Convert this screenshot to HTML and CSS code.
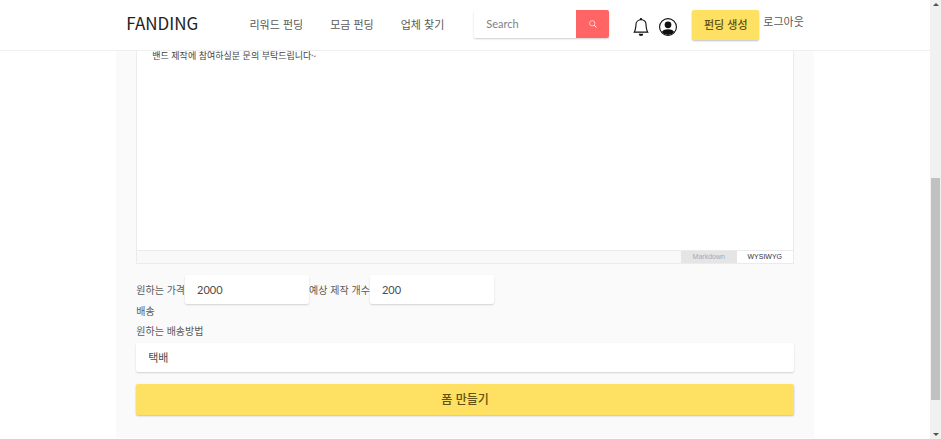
FILE: index.html
```html
<!DOCTYPE html>
<html lang="ko">
<head>
<meta charset="utf-8">
<title>FANDING</title>
<link rel="stylesheet" href="styles.css">
</head>
<body>
<div class="page">
  <header class="header">
    <div class="header-inner">
      <a class="brand" href="#">FANDING</a>
      <nav class="nav">
        <a href="#">리워드 펀딩</a>
        <a href="#">모금 펀딩</a>
        <a href="#">업체 찾기</a>
      </nav>
      <form class="search">
        <input type="text" placeholder="Search" aria-label="Search">
        <button type="button" aria-label="검색">
          <svg width="8" height="8" viewBox="0 0 16 16" fill="none" stroke="currentColor" stroke-width="1.3"><circle cx="6.5" cy="6.5" r="5.3"/><path d="M10.4 10.4 15 15" stroke-width="2"/></svg>
        </button>
      </form>
      <div class="icons">
        <a href="#" aria-label="알림">
          <svg width="18" height="18" viewBox="0 0 16 16" fill="currentColor"><path d="M8 16a2 2 0 0 0 2-2H6a2 2 0 0 0 2 2z"/><path fill-rule="evenodd" d="M8 1.918l-.797.161A4.002 4.002 0 0 0 4 6c0 .628-.134 2.197-.459 3.742-.16.767-.376 1.566-.663 2.258h10.244c-.287-.692-.502-1.49-.663-2.258C12.134 8.197 12 6.628 12 6a4.002 4.002 0 0 0-3.203-3.92L8 1.917zM14.22 12c.223.447.481.801.78 1H1c.299-.199.557-.553.78-1C2.68 10.2 3 6.88 3 6c0-2.42 1.72-4.44 4.005-4.901a1 1 0 1 1 1.99 0A5.002 5.002 0 0 1 13 6c0 .88.32 4.2 1.22 6z"/></svg>
        </a>
        <a href="#" aria-label="내 계정">
          <svg width="18" height="18" viewBox="0 0 16 16" fill="currentColor"><path d="M13.468 12.37C12.758 11.226 11.195 10 8 10s-4.757 1.225-5.468 2.37A6.987 6.987 0 0 0 8 15a6.987 6.987 0 0 0 5.468-2.63z"/><circle cx="8" cy="6" r="3"/><path fill-rule="evenodd" d="M8 1a7 7 0 1 0 0 14A7 7 0 0 0 8 1zM0 8a8 8 0 1 1 16 0A8 8 0 0 1 0 8z"/></svg>
        </a>
      </div>
      <button class="btn create" type="button">펀딩 생성</button>
      <a class="logout" href="#">로그아웃</a>
    </div>
  </header>
  <main class="panel">
    <section class="editor">
      <div class="editor-body"><p>밴드 제작에 참여하실분 문의 부탁드립니다~</p></div>
      <div class="editor-modes">
        <button type="button">Markdown</button>
        <button class="active" type="button">WYSIWYG</button>
      </div>
    </section>
    <form class="form">
      <div class="row">
        <label for="price">원하는 가격</label><input class="field" id="price" type="text" value="2000">
        <label for="count">예상 제작 개수</label><input class="field" id="count" type="text" value="200">
      </div>
      <p class="line">배송</p>
      <label class="line" for="delivery">원하는 배송방법</label>
      <select class="field wide" id="delivery"><option>택배</option></select>
      <button class="btn submit" type="button">폼 만들기</button>
    </form>
  </main>
</div>
<div class="scrollbar" aria-hidden="true">
  <i class="arrow up"></i>
  <div class="track"><div class="thumb"></div></div>
  <i class="arrow down"></i>
</div>
</body>
</html>
```
FILE: styles.css
```css
* { box-sizing: border-box; }
body {
  margin: 0;
  min-height: 100vh;
  display: grid;
  grid-template-columns: 1fr 11px;
  background: #fff;
  color: #5a5a5a;
  font: 10px/20px "Noto Sans CJK KR", sans-serif;
}
a { color: inherit; text-decoration: none; }
p { margin: 0; }
button, input, select { font: inherit; color: inherit; border: 0; margin: 0; }

.page { display: flex; flex-direction: column; padding-bottom: 1px; }
.header { border-bottom: 1px solid #efefef; background: #fff; }
.header-inner, .panel { width: 75%; margin: 0 auto; }
.header-inner {
  display: flex;
  align-items: flex-start;
  height: 50px;
  padding: 10px 10px 0;
  font-size: 11px;
  line-height: 28px;
}
.brand { font-size: 17px; line-height: 26px; color: #222; }
.nav { display: flex; gap: 27px; margin: 0 30px 0 auto; }

.search {
  display: flex;
  width: 135px;
  height: 28px;
  border-radius: 2px;
  overflow: hidden;
  box-shadow: 0 1px 2px rgba(0, 0, 0, .2);
}
.search input {
  flex: 1;
  min-width: 0;
  padding: 0 12px;
  background: #fff;
  font-family: Lato, sans-serif;
}
.search input::placeholder { color: #7c8288; }
.search button {
  display: grid;
  place-items: center;
  width: 33px;
  padding: 0;
  background: #ff6565;
  color: #fff;
}
.icons { display: flex; gap: 9px; margin: 8px 15px 0 23px; color: #111; }
.icons svg { display: block; }

.btn {
  border-radius: 2px;
  background: #fee162;
  color: #5f5212;
  font-weight: 500;
  box-shadow: 0 1px 2px rgba(0, 0, 0, .25);
}
.create { width: 67px; height: 30px; padding: 0 0 2px; }
.logout { margin-left: 4px; line-height: 22px; }

.panel { flex: 1; padding: 0 20px 20px; background: #fafafa; }
.editor { border: 1px solid #ebebeb; border-top: 0; }
.editor-body {
  height: 199px;
  padding: 0 15px;
  background: #fff;
  color: #444;
  font-size: 9px;
  line-height: 10px;
}
.editor-modes {
  display: flex;
  justify-content: flex-end;
  height: 13px;
  border-top: 1px solid #ebebeb;
  background: #f9f9f9;
  font: 7px/12px "Liberation Sans", sans-serif;
}
.editor-modes button {
  width: 56px;
  padding: 0;
  background: #e5e5e5;
  color: #a0aabf;
}
.editor-modes .active { background: #fff; color: #333; }

.form { display: flex; flex-direction: column; padding-top: 11px; }
.row { display: flex; align-items: center; height: 29px; margin-bottom: -3px; }
.field {
  width: 124px;
  height: 29px;
  padding: 0 12px;
  border-radius: 2px;
  background: #fff;
  color: #4c4c4c;
  font: 11px/20px Lato, "Noto Sans CJK KR", sans-serif;
  box-shadow: 0 1px 2px rgba(0, 0, 0, .16);
}
.line { height: 20px; }
.wide { width: 100%; margin: 2px 0 12px; appearance: none; }
.submit { width: 100%; height: 31px; padding: 0 0 2px; font-size: 12px; }

.scrollbar {
  display: flex;
  flex-direction: column;
  align-items: center;
  padding: 3px 1px;
  background: #f1f1f1;
}
.track { flex: 1; width: 100%; padding: 172px 0 33px; display: flex; }
.thumb { flex: 1; background: #c1c1c1; }
.arrow { border: 3px solid transparent; }
.up { border-top: 0; border-bottom-color: #505050; }
.down { border-bottom: 0; border-top-color: #505050; }
```
